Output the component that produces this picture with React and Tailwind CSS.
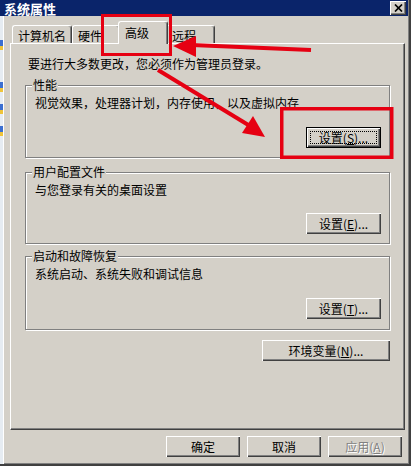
import React from "react";

const bevel =
  "shadow-[inset_1px_1px_0_#ffffff,inset_-1px_-1px_0_#404040,inset_-2px_-2px_0_#808080]";

function Btn({ children, className = "", def = false, disabled = false }) {
  if (def) {
    return (
      <div
        className={`flex h-[21px] border border-black bg-[#d4d0c8] p-[3px] ${bevel} ${className}`}
      >
        <div className="flex flex-1 items-center justify-center border border-dotted border-black leading-[13px]">
          {children}
        </div>
      </div>
    );
  }
  return (
    <div
      className={`flex h-[21px] items-center justify-center bg-[#d4d0c8] leading-[14px] ${bevel} ${
        disabled ? "text-[#808080] [text-shadow:1px_1px_0_#ffffff]" : ""
      } ${className}`}
    >
      {children}
    </div>
  );
}

function Group({ label, desc, btn, className = "", mb = "mb-[9px]" }) {
  return (
    <div
      className={`flex flex-col border border-[#808080] shadow-[inset_1px_1px_0_#ffffff,1px_1px_0_#ffffff] ${className}`}
    >
      <div className="-mt-[8px] ml-[6px] h-[14px] self-start bg-[#d4d0c8] px-[1px] leading-[14px]">
        {label}
      </div>
      <div className="ml-[9px] mt-[4px] h-[14px] leading-[14px]">{desc}</div>
      <div className={`mr-[8px] mt-auto self-end ${mb}`}>{btn}</div>
    </div>
  );
}

function Tab({ children, w, sel = false }) {
  if (sel) {
    return (
      <div
        className={`relative z-10 -mx-[2px] -mb-[1px] h-[23px] rounded-t-[3px] border-l border-r border-t border-l-white border-r-[#404040] border-t-white bg-[#d4d0c8] pl-[6px] pt-[4px] leading-[14px] shadow-[inset_-1px_0_0_#808080] ${w}`}
      >
        {children}
      </div>
    );
  }
  return (
    <div
      className={`h-[18px] rounded-t-[3px] border-l border-r border-t border-l-white border-r-[#404040] border-t-white bg-[#d4d0c8] pl-[5px] pt-[3px] leading-[14px] shadow-[inset_-1px_0_0_#808080] ${w}`}
    >
      {children}
    </div>
  );
}

function CloseX() {
  return (
    <svg width="9" height="8" viewBox="0 0 9 8">
      <path d="M1 0.5 L8 7.5 M8 0.5 L1 7.5" stroke="#000" strokeWidth="1.7" />
    </svg>
  );
}

function StripIcon({ className }) {
  return (
    <div className={`flex flex-col ${className}`}>
      <div className="h-[6px] bg-[#3b6fd1]" />
      <div className="h-[4px] bg-[#efc43a]" />
    </div>
  );
}

export default function App() {
  return (
    <div className="relative flex h-[466px] w-[411px] flex-col overflow-hidden border-b-2 border-r-2 border-[#404040] bg-[#d4d0c8] font-['Noto_Sans_CJK_SC','Noto_Sans',sans-serif] text-[12px] text-black shadow-[inset_-1px_-1px_0_#808080]">
      {/* title bar */}
      <div className="mr-[1px] flex h-[16px] shrink-0 items-center justify-between bg-[#0a246a] pl-[4px] pr-[2px]">
        <span className="text-[13px] font-bold leading-[15px] text-white">
          系统属性
        </span>
        <div
          className={`flex h-[14px] w-[16px] items-center justify-center bg-[#d4d0c8] ${bevel}`}
        >
          <CloseX />
        </div>
      </div>

      <div className="flex flex-1">
        {/* desktop strip on left */}
        <div className="flex w-[3px] flex-col bg-[#e6ecf2]">
          <StripIcon className="mt-[24px]" />
          <StripIcon className="mt-[32px]" />
          <StripIcon className="mt-[12px]" />
          <StripIcon className="mt-[12px]" />
        </div>

        {/* window body */}
        <div className="flex flex-1 flex-col border-l border-white pl-[6px] pr-[4px]">
          {/* tabs */}
          <div className="mt-[5px] flex h-[22px] items-end pl-[2px]">
            <Tab w="w-[60px]">计算机名</Tab>
            <Tab w="w-[48px]">硬件</Tab>
            <Tab w="w-[50px]" sel>
              高级
            </Tab>
            <Tab w="w-[49px]">远程</Tab>
          </div>

          {/* panel */}
          <div className="flex h-[387px] flex-col border-b border-l border-r border-t border-b-[#404040] border-l-white border-r-[#404040] border-t-white px-[14px] shadow-[inset_-1px_-1px_0_#808080]">
            <div className="ml-[3px] mt-[13px] h-[14px] leading-[14px]">
              要进行大多数更改，您必须作为管理员登录。
            </div>

            <Group
              className="mt-[14px] h-[73px]"
              label="性能"
              desc="视觉效果，处理器计划，内存使用，以及虚拟内存"
              btn={
                <Btn def className="w-[75px]">
                  设置(<u>S</u>)...
                </Btn>
              }
            />

            <Group
              className="mt-[14px] h-[72px]"
              label="用户配置文件"
              desc="与您登录有关的桌面设置"
              btn={
                <Btn className="w-[75px]">
                  设置(<u>E</u>)...
                </Btn>
              }
            />

            <Group
              className="mt-[12px] h-[74px]"
              label="启动和故障恢复"
              desc="系统启动、系统失败和调试信息"
              mb="mb-[10px]"
              btn={
                <Btn className="w-[75px]">
                  设置(<u>T</u>)...
                </Btn>
              }
            />

            <div className="mt-[10px] flex justify-end">
              <Btn className="w-[128px]">
                环境变量(<u>N</u>)...
              </Btn>
            </div>
          </div>

          {/* bottom buttons */}
          <div className="mt-[6px] flex justify-end gap-[7px] pr-[3px]">
            <Btn className="w-[74px]">确定</Btn>
            <Btn className="w-[74px]">取消</Btn>
            <Btn className="w-[74px]" disabled>
              应用(<u>A</u>)
            </Btn>
          </div>
        </div>
      </div>

      {/* red annotations */}
      <svg
        className="pointer-events-none absolute left-0 top-0"
        width="411"
        height="466"
        viewBox="0 0 411 466"
      >
        <rect
          x="102.5"
          y="15.5"
          width="68"
          height="39"
          fill="none"
          stroke="#e60012"
          strokeWidth="3"
        />
        <rect
          x="281.75"
          y="108.75"
          width="110"
          height="48.5"
          fill="none"
          stroke="#e60012"
          strokeWidth="3.5"
        />
        <line x1="311" y1="50" x2="192" y2="45" stroke="#e60012" strokeWidth="4" />
        <polygon points="173,46 196,36 196,57" fill="#e60012" />
        <line x1="158" y1="70" x2="250" y2="126" stroke="#e60012" strokeWidth="4" />
        <polygon points="265,137 253,116 242,133" fill="#e60012" />
      </svg>
    </div>
  );
}
